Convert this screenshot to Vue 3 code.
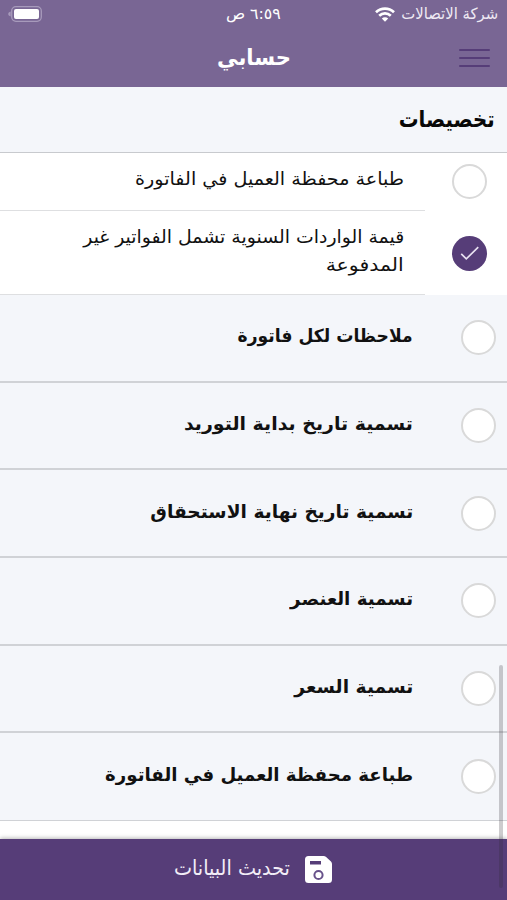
<script setup>
const rows = [
  { text: 'ملاحظات لكل فاتورة', width: 175 },
  { text: 'تسمية تاريخ بداية التوريد', width: 229 },
  { text: 'تسمية تاريخ نهاية الاستحقاق', width: 263 },
  { text: 'تسمية العنصر', width: 123 },
  { text: 'تسمية السعر', width: 119 },
  { text: 'طباعة محفظة العميل في الفاتورة', width: 308 },
]

// Condenses or widens a label horizontally to its designed width.
const vFit = {
  mounted(el, { value }) {
    el.style.transform = `scaleX(${value / el.getBoundingClientRect().width})`
  },
}
</script>

<template>
  <main class="screen" dir="rtl">
    <header class="top">
      <div class="status">
        <div class="carrier">
          <span v-fit="97" class="fit">شركة الاتصالات</span>
        </div>
        <svg class="wifi" viewBox="0 0 20 15" width="20" height="15">
          <g fill="none" stroke="#fff" stroke-width="2.7">
            <path d="M1 5.3C6.2.4 13.8.4 19 5.3" />
            <path d="M4.2 8.7c3.4-3.1 8.2-3.1 11.6 0" />
          </g>
          <path d="M6.8 11.4c1.9-1.7 4.5-1.7 6.4 0L10 14.7z" fill="#fff" />
        </svg>
        <div class="time"><span v-fit="55" class="fit">٦:٥٩ ص</span></div>
        <svg class="battery" viewBox="0 0 34 16" width="34" height="16">
          <rect x="3.7" y=".7" width="29.6" height="14.6" rx="4.2" fill="none" stroke="#a79abb" stroke-width="1.3" />
          <rect x="6" y="3" width="25" height="10" rx="2" fill="#fff" />
          <path d="M2.700 5.500v5C-.6 9.500-.6 6.500 2.700 5.500z" fill="#a79abb" />
        </svg>
      </div>
      <div class="nav">
        <div class="burger"><i></i><i></i><i></i></div>
        <h1><span v-fit="74" class="fit">حسابي</span></h1>
      </div>
    </header>

    <h2 class="heading"><span v-fit="96" class="fit">تخصيصات</span></h2>

    <section class="options">
      <div class="option first">
        <span class="radio"></span>
        <div class="body"><span v-fit="269" class="fit">طباعة محفظة العميل في الفاتورة</span></div>
      </div>
      <div class="option second">
        <span class="radio checked">
          <svg viewBox="0 0 36 36" width="35" height="35">
            <path d="M9.500 18.300l5.200 5.200L27 11.500" fill="none" stroke="#e9e2f1" stroke-width="1.700" />
          </svg>
        </span>
        <div class="body">
          <span v-fit="321" class="fit">قيمة الواردات السنوية تشمل الفواتير غير</span>
          <span v-fit="78" class="fit">المدفوعة</span>
        </div>
      </div>
    </section>

    <section class="settings">
      <div v-for="row in rows" :key="row.text" class="setting">
        <span class="radio"></span>
        <span v-fit="row.width" class="fit">{{ row.text }}</span>
      </div>
    </section>

    <div class="spacer"></div>
    <button class="save">
      <svg viewBox="0 0 27 27" width="27" height="27">
        <path d="M3.500 0H18.500q1.500 0 2.600 1L26 5.500q1 1 1 2.500v15.500a3.500 3.500 0 0 1-3.500 3.500h-20A3.500 3.500 0 0 1 0 23.500v-20A3.500 3.500 0 0 1 3.500 0z" fill="#fff" />
        <rect x="5" y="5" width="11" height="3.500" fill="#563d78" />
        <circle cx="13.500" cy="19" r="4.100" fill="none" stroke="#67518a" stroke-width="2" />
      </svg>
      <span v-fit="116" class="fit">تحديث البيانات</span>
    </button>
    <div class="scrollbar"></div>
  </main>
</template>

<style>
body { margin: 0; background: #fff; }
</style>

<style scoped>
.screen {
  position: relative;
  display: flex;
  flex-direction: column;
  width: 507px;
  height: 900px;
  overflow: hidden;
  background: #fff;
  color: #111;
  font-family: "DejaVu Sans", "Noto Sans", sans-serif;
}
.fit {
  display: inline-block;
  flex: none;
  white-space: nowrap;
  transform-origin: right center;
}
.top {
  box-sizing: border-box;
  height: 87px;
  background: #796694;
  color: #fff;
}
.status {
  display: grid;
  grid-template-columns: 97px 20px 1fr 34px;
  column-gap: 6px;
  align-items: center;
  height: 28px;
  padding: 0 9px 0 8px;
}
.carrier, .time { font-size: 15.500px; line-height: 28px; }
.carrier { width: 97px; color: #eee9f3; }
.time { padding-right: 88px; }
.nav {
  display: flex;
  align-items: center;
  height: 60px;
  padding-right: 17px;
}
.burger { display: flex; flex-direction: column; gap: 5.500px; width: 31px; }
.burger i { height: 2.500px; background: #563d78; border-radius: 1px; }
h1 { margin: 0 168px 0 0; font-size: 22px; line-height: 30px; }
.heading {
  box-sizing: border-box;
  height: 66px;
  margin: 0;
  padding: 13px 12px 0;
  border-bottom: 1px solid #c8cace;
  background: #f4f6fa;
  color: #080808;
  font-size: 23px;
  line-height: 38px;
}
.radio {
  box-sizing: border-box;
  flex: none;
  width: 35px;
  height: 35px;
  border: 2px solid #d9d9d9;
  border-radius: 50%;
  background: #fff;
}
.checked { border: 0; background: #563d78; }
.checked svg { display: block; }
.option { display: flex; align-items: center; padding-right: 20px; }
.option .body {
  box-sizing: border-box;
  display: flex;
  flex-direction: column;
  align-items: flex-start;
  align-self: stretch;
  flex: 1;
  margin-right: 27px;
  padding: 12px 21px 0 0;
  border-bottom: 1px solid #dedfe1;
  font-size: 18px;
  line-height: 28px;
}
.first { height: 58px; }
.first .radio { margin-bottom: 2px; }
.second { height: 84px; }
.settings { background: #f4f6fa; }
.setting {
  box-sizing: border-box;
  display: flex;
  align-items: center;
  gap: 48px;
  height: 87.650px;
  padding-right: 11px;
  border-bottom: 2px solid #d0d2d6;
  font-size: 18px;
  font-weight: 700;
  line-height: 28px;
}
.setting:last-child { border-bottom-width: 1px; }
.setting .fit { margin-bottom: 3px; }
.spacer { flex: 1; }
.save {
  box-sizing: border-box;
  display: flex;
  align-items: center;
  gap: 15px;
  width: 100%;
  height: 61px;
  padding: 0 175px 0 0;
  border: 0;
  background: #563d78;
  color: #f2edf7;
  font: 21px/30px "DejaVu Sans", sans-serif;
  box-shadow: 0 -1px 4px rgba(0, 0, 0, .28);
}
.save .fit { margin-bottom: 4px; }
.scrollbar {
  position: absolute;
  top: 665px;
  right: 4px;
  width: 4px;
  height: 223px;
  border-radius: 2px;
  background: rgba(45, 40, 50, .24);
}
</style>
